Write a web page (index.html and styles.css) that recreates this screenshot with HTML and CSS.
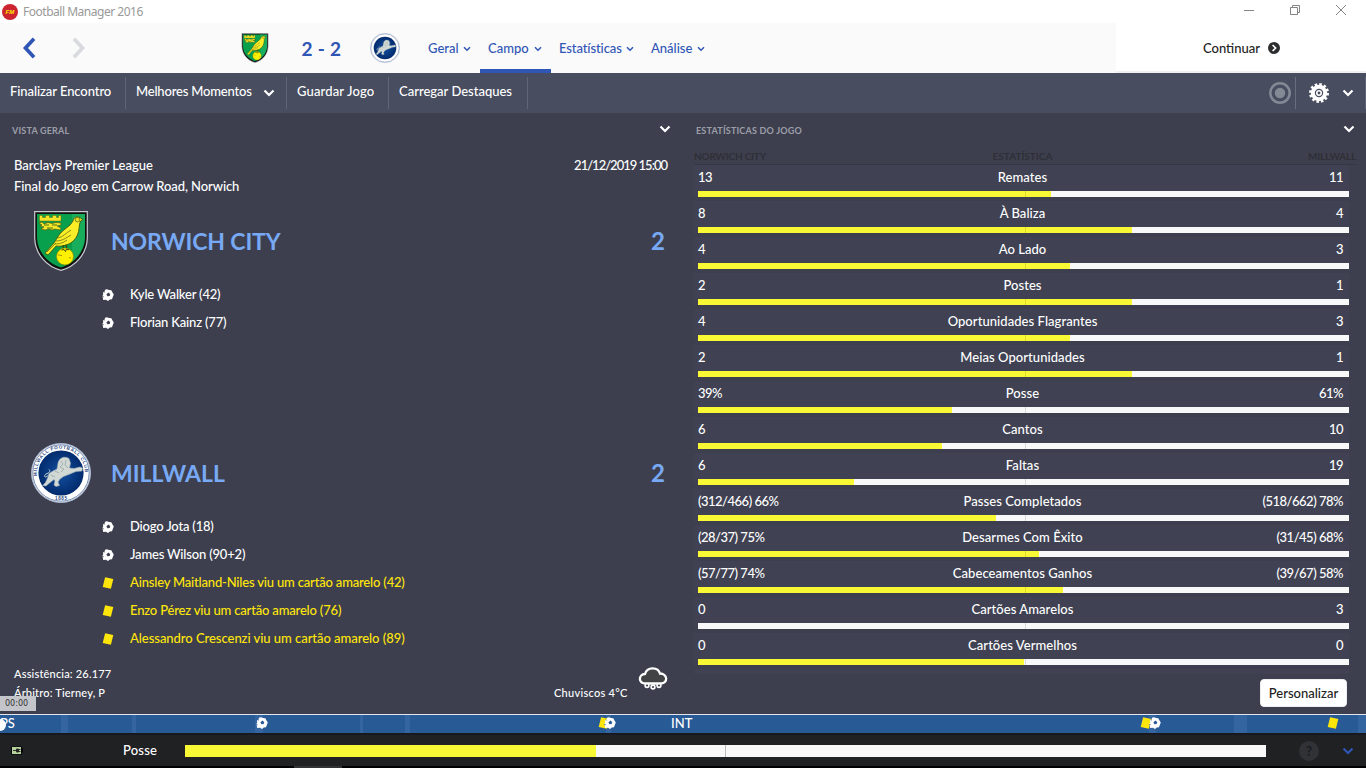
FILE: index.html
```html
<!DOCTYPE html>
<html lang="pt">
<head>
  <meta charset="UTF-8" />
  <meta name="viewport" content="width=device-width, initial-scale=1" />
  <title>Football Manager 2016</title>
  <link rel="stylesheet" href="styles.css">
</head>
<body>
  <!-- Shared icons -->
  <svg class="defs" width="0" height="0">
    <symbol id="chevron" viewBox="0 0 12 8"><path d="M1.5 1.5L6 6l4.500-4.500" fill="none" stroke="currentColor" stroke-width="2.200"/></symbol>
    <symbol id="ball" viewBox="0 0 12 12">
      <path d="M3 .8L5 .2 7 1 9.300 1.200 10.500 3.500 11.800 5.500 10.800 8 10 10.300 7.800 10.500 6 11.900 4 10.800 1.200 11 .8 8.500 0 7.800 1.200 5.500 1 3.200 2.600 2.800Z" fill="#fff"/>
      <path d="M6.300 3.600L8.200 4.900 7.700 7 5.500 7.300 4.400 5.400Z" fill="var(--hole, #3d3f4f)"/>
      <path d="M0 7.600l1.700.2M1.500 2.800l1 .5" stroke="var(--hole, #3d3f4f)" stroke-width=".8" fill="none"/>
    </symbol>
    <symbol id="card" viewBox="0 0 12 12"><path d="M3.100.3L11.300 2 8.900 11.700.7 10Z" fill="#ffe60a"/></symbol>
    <symbol id="norwich" viewBox="0 0 54 60">
      <path d="M.7.7H53.300V27C53 43 41 56 27 59.300 13 56 1 43 .7 27Z" fill="#111" stroke="#c9cbd0" stroke-width="1.200"/>
      <path d="M3 3H51V27C50.500 41 40 52.500 27 56.500 14 52.500 3.500 41 3 27Z" fill="#08a04c"/>
      <path d="M38 3H51V27C50 38 45 45 38 51Z" fill="#23b766" opacity=".6"/>
      <path d="M5.500 4.500h3v2h3v-2h4v2h3v-2h4v2h2v-2h2.500v5.500H5.500Z" fill="#f6e62a" stroke="#6b6a12" stroke-width=".5"/>
      <path d="M5 12l3-1 2 2 4-1.500 4 1 4-1 5 .5v2l-4 1 4 2-1 2-5-1-3 1-3-1-4 1-4-1 3-2-4-1 2-1Z" fill="#f6e62a" stroke="#5c6010" stroke-width=".7"/>
      <path d="M10 14h5m3 0h5m-10 3h6" stroke="#35650f" stroke-width=".9"/>
      <path d="M49 8.500L46 6.800C43 4.500 39.500 6.500 39 10 36 16 29 18 25 24L20 32 11 42 14 44 22 35C30 36 39 33 43 25 46 19 44.500 14 46.500 10Z" fill="#faee28" stroke="#3c4c0c" stroke-width=".8"/>
      <path d="M24 27c5-1 8-5 13-8M22 30c6 0 10-3 15-6M21 33c6 0 9-2 12-4M13 41l9-9" fill="none" stroke="#6b6f12" stroke-width=".8"/>
      <circle cx="43.500" cy="8.700" r="2.300" fill="#e8dc27" stroke="#55601a" stroke-width=".7"/>
      <path d="M29 34l1 5M32 33.500l1 5" stroke="#34440a" stroke-width="1.200"/>
      <circle cx="31" cy="45.500" r="8.500" fill="#fff000" stroke="#7d7b0a" stroke-width=".6"/>
      <path d="M27.500 39l2.500-.5 1.500 2 1-2.500 2.500.8" stroke="#34440a" stroke-width="1" fill="none"/>
      <path d="M24 44l4 .5m7 2l2 .5" stroke="#928800" stroke-width=".8"/>
    </symbol>
    <symbol id="millwall" viewBox="0 0 60 60">
      <circle cx="30" cy="30" r="29.500" fill="#fff" stroke="#a9b7cf"/>
      <circle cx="30" cy="30" r="28.200" fill="none" stroke="#36558b" stroke-width=".7"/>
      <circle cx="30" cy="30" r="22.600" fill="url(#blueGlow)"/>
      <path d="M27 20C28 15 33 12.500 38 15.500L39.500 20 38.500 25 43 25.500 49 24 51.500 25 51 28 45 28.500 39 31 32.500 33.500 29 36 27 39 28.500 42.500 25 43.500 23 42 24 38 23 36.500 18.500 40 15 43 11.500 42.500 14.500 39.500 17 34 18 30.500 22 28 26 26Z" fill="#d2d9d5" stroke="#9badb6" stroke-width=".6"/>
      <path d="M30 18l2 3-3 3 4 2-3 3m5-12l-1 5 3 3m-13 3l4 2m-8 2l4 2" fill="none" stroke="#93a5a7" stroke-width=".8"/>
      <path d="M17.500 32C14 36 12 33 15 31 18 30 20 28 18 26.500" fill="none" stroke="#c5d0d0" stroke-width="1"/>
    </symbol>
    <radialGradient id="blueGlow"><stop offset="0" stop-color="#1450a0"/><stop offset="1" stop-color="#022b6d"/></radialGradient>
  </svg>

  <!-- Window title bar -->
  <header class="titlebar">
    <svg class="fm-logo" viewBox="0 0 16 16"><circle cx="8" cy="8" r="8" fill="#cc2531"/><text x="3.500" y="10.200">FM</text></svg>
    <span class="window-title">Football Manager 2016</span>
    <div class="window-buttons">
      <svg width="12" height="12" viewBox="0 0 12 12"><path d="M1 6.500h10"/></svg>
      <svg width="12" height="12" viewBox="0 0 12 12"><path d="M1.500 3.500h7v7h-7ZM3.500 3v-1.500h7v7H9"/></svg>
      <svg width="12" height="12" viewBox="0 0 12 12"><path d="M1 1l10 10M11 1L1 11"/></svg>
    </div>
  </header>

  <!-- Navigation -->
  <nav class="navbar">
    <svg class="arrow back" viewBox="0 0 14 22"><path d="M12 1.800L3.500 11l8.500 9.200"/></svg>
    <svg class="arrow forward" viewBox="0 0 14 22"><path d="M2 1.800L10.500 11 2 20.200"/></svg>
    <svg class="nav-norwich"><use href="#norwich"/></svg>
    <div class="score">2 - 2</div>
    <svg class="nav-millwall"><use href="#millwall"/></svg>
    <div class="tabs">
      <a class="tab tab-geral">Geral <svg><use href="#chevron"/></svg></a>
      <a class="tab tab-campo active">Campo <svg><use href="#chevron"/></svg></a>
      <a class="tab tab-stats">Estatísticas <svg><use href="#chevron"/></svg></a>
      <a class="tab tab-analise">Análise <svg><use href="#chevron"/></svg></a>
    </div>
    <div class="continue">
      <span>Continuar</span>
      <svg viewBox="0 0 12 12"><circle cx="6" cy="6" r="6" fill="#2c2d2f"/><path d="M4.600 3L7.600 6l-3 3" fill="none" stroke="#fff" stroke-width="1.700"/></svg>
    </div>
  </nav>

  <div class="toolbar">
    <div class="tool tool-end">Finalizar Encontro</div>
    <div class="tool tool-best">Melhores Momentos <svg><use href="#chevron"/></svg></div>
    <div class="tool tool-save">Guardar Jogo</div>
    <div class="tool tool-load">Carregar Destaques</div>
    <div class="toolbar-right">
      <svg class="record" viewBox="0 0 22 22"><circle cx="11" cy="11" r="9.700" fill="none" stroke="#858996" stroke-width="2.500"/><circle cx="11" cy="11" r="5.200" fill="#858996"/></svg>
      <div class="settings">
        <svg class="gear" viewBox="0 0 20 20">
          <circle cx="10" cy="10" r="6.200" fill="none" stroke="#fff" stroke-width="4"/>
          <circle cx="10" cy="10" r="8.700" fill="none" stroke="#fff" stroke-width="2.600" stroke-dasharray="2.500 2.055"/>
          <circle cx="10" cy="10" r="2.200" fill="none" stroke="#fff" stroke-width="1.600"/>
        </svg>
        <svg class="chev"><use href="#chevron"/></svg>
      </div>
    </div>
  </div>

  <main class="panels">
    <!-- Overview -->
    <section class="overview">
      <div class="panel-title"><h2>VISTA GERAL</h2><svg><use href="#chevron"/></svg></div>
      <div class="match-info">
        <div class="info-row"><span>Barclays Premier League</span><span class="date">21/12/2019 15:00</span></div>
        <div class="info-row"><span class="venue">Final do Jogo em Carrow Road, Norwich</span></div>
      </div>
      <div class="team">
        <div class="team-head"><svg class="crest"><use href="#norwich"/></svg><h1 class="name-norwich">NORWICH CITY</h1><span class="goals">2</span></div>
        <ul class="events">
          <li><svg><use href="#ball"/></svg><span>Kyle Walker (42)</span></li>
          <li><svg><use href="#ball"/></svg><span>Florian Kainz (77)</span></li>
        </ul>
      </div>
      <div class="team">
        <div class="team-head">
          <svg class="crest" viewBox="0 0 60 60">
            <use href="#millwall"/>
            <path id="badgeArc" d="M6.100 33A24.100 24.100 0 1 1 53.900 33" fill="none"/>
            <text class="badge-text"><textPath href="#badgeArc" textLength="78" lengthAdjust="spacing">MILLWALL FOOTBALL CLUB</textPath></text>
            <text class="badge-text" x="24" y="57.300" textLength="12">1885</text>
          </svg>
          <h1>MILLWALL</h1><span class="goals">2</span>
        </div>
        <ul class="events">
          <li><svg><use href="#ball"/></svg><span>Diogo Jota (18)</span></li>
          <li><svg><use href="#ball"/></svg><span>James Wilson (90+2)</span></li>
          <li class="booked"><svg><use href="#card"/></svg><span>Ainsley Maitland-Niles viu um cartão amarelo (42)</span></li>
          <li class="booked"><svg><use href="#card"/></svg><span>Enzo Pérez viu um cartão amarelo (76)</span></li>
          <li class="booked last"><svg><use href="#card"/></svg><span>Alessandro Crescenzi viu um cartão amarelo (89)</span></li>
        </ul>
      </div>
      <footer class="match-foot">
        <div class="attendance"><div>Assistência: 26.177</div><div>Árbitro: Tierney, P</div></div>
        <div class="weather">Chuviscos 4°C</div>
        <svg class="cloud" viewBox="0 0 30 24">
          <path d="M8 17.500C0 17.500 0 8.500 7 8 9 .5 20 .5 22 7.500 29.500 7.500 30.500 17 23 17.500Z" fill="#414345" stroke="#fff" stroke-width="2.300"/>
          <circle cx="9" cy="19.500" r="1.900"/><circle cx="15" cy="21" r="1.900"/><circle cx="21" cy="19.500" r="1.900"/>
        </svg>
      </footer>
    </section>

    <!-- Match stats -->
    <section class="stats">
      <div class="panel-title"><h2>ESTATÍSTICAS DO JOGO</h2><svg><use href="#chevron"/></svg></div>
      <div class="stats-head"><span>NORWICH CITY</span><span>ESTATÍSTICA</span><span>MILLWALL</span></div>
      <div class="stats-list">
        <div class="stat"><div class="values"><span>13</span><span>Remates</span><span>11</span></div><div class="bar"><div class="fill" style="width:54.2%"></div></div></div>
        <div class="stat"><div class="values"><span>8</span><span>À Baliza</span><span>4</span></div><div class="bar"><div class="fill" style="width:66.67%"></div></div></div>
        <div class="stat"><div class="values"><span>4</span><span>Ao Lado</span><span>3</span></div><div class="bar"><div class="fill" style="width:57.14%"></div></div></div>
        <div class="stat"><div class="values"><span>2</span><span>Postes</span><span>1</span></div><div class="bar"><div class="fill" style="width:66.67%"></div></div></div>
        <div class="stat"><div class="values"><span>4</span><span>Oportunidades Flagrantes</span><span>3</span></div><div class="bar"><div class="fill" style="width:57.14%"></div></div></div>
        <div class="stat"><div class="values"><span>2</span><span>Meias Oportunidades</span><span>1</span></div><div class="bar"><div class="fill" style="width:66.67%"></div></div></div>
        <div class="stat"><div class="values"><span>39%</span><span>Posse</span><span>61%</span></div><div class="bar"><div class="fill" style="width:39%"></div></div></div>
        <div class="stat"><div class="values"><span>6</span><span>Cantos</span><span>10</span></div><div class="bar"><div class="fill" style="width:37.5%"></div></div></div>
        <div class="stat"><div class="values"><span>6</span><span>Faltas</span><span>19</span></div><div class="bar"><div class="fill" style="width:24%"></div></div></div>
        <div class="stat"><div class="values"><span>(312/466) 66%</span><span>Passes Completados</span><span>(518/662) 78%</span></div><div class="bar"><div class="fill" style="width:45.8%"></div></div></div>
        <div class="stat"><div class="values"><span>(28/37) 75%</span><span>Desarmes Com Êxito</span><span>(31/45) 68%</span></div><div class="bar"><div class="fill" style="width:52.45%"></div></div></div>
        <div class="stat"><div class="values"><span>(57/77) 74%</span><span>Cabeceamentos Ganhos</span><span>(39/67) 58%</span></div><div class="bar"><div class="fill" style="width:56.06%"></div></div></div>
        <div class="stat"><div class="values"><span>0</span><span>Cartões Amarelos</span><span>3</span></div><div class="bar"><div class="fill" style="width:0%"></div></div></div>
        <div class="stat"><div class="values"><span>0</span><span>Cartões Vermelhos</span><span>0</span></div><div class="bar"><div class="fill" style="width:50%"></div></div></div>
      </div>
      <button class="customize">Personalizar</button>
    </section>
  </main>

  <!-- Match timeline -->
  <div class="timeline">
    <i class="band" style="left:61px;width:7px"></i>
    <i class="band" style="left:132px;width:4px"></i>
    <i class="band" style="left:255px;width:8px"></i>
    <i class="band" style="left:360px;width:3px"></i>
    <i class="band" style="left:405px;width:5px"></i>
    <i class="band" style="left:606px;width:5px"></i>
    <i class="band" style="left:1149px;width:7px"></i>
    <i class="band" style="left:1234px;width:13px"></i>
    <i class="band" style="left:1358px;width:8px"></i>
    <span class="mark" style="left:0px">PS</span>
    <i class="playhead"></i>
    <svg style="left:256px"><use href="#ball"/></svg>
    <svg style="left:598px"><use href="#card"/></svg>
    <svg style="left:604px"><use href="#ball"/></svg>
    <span class="mark" style="left:671px">INT</span>
    <svg style="left:1140px"><use href="#card"/></svg>
    <svg style="left:1149px"><use href="#ball"/></svg>
    <svg style="left:1327px"><use href="#card"/></svg>
    <span class="clock">00:00</span>
  </div>

  <div class="statusbar">
    <svg class="plug" viewBox="0 0 13 9"><path d="M0 .5h11v2h1v4h-1v2H0Z" fill="#050505"/><path d="M1 1h9v7H1Z" fill="#b5d29b"/><path d="M2 4.500h3M5.500 3h2v3h-2ZM7.500 3.500h2M7.500 5.500h2" stroke="#222" stroke-width=".9" fill="#222"/></svg>
    <span class="posse">Posse</span>
    <div class="possession"><div class="fill" style="width:38%"></div></div>
    <div class="help">?</div>
    <svg class="chev"><use href="#chevron"/></svg>
  </div>
  <div class="bottom-edge"><i></i></div>
</body>
</html>
```
FILE: styles.css
```css
* {
  box-sizing: border-box;
}

body {
  margin: 0;
  width: 1366px;
  height: 768px;
  overflow: hidden;
  display: flex;
  flex-direction: column;
  background: #3d3f4f;
  color: #fff;
  font-family: 'Lato', sans-serif;
  font-size: 13px;
  font-weight: 500;
}

h1, h2, ul {
  margin: 0;
  padding: 0;
}

svg {
  display: block;
  flex: none;
}

.defs {
  position: absolute;
}

.badge-text {
  font: bold 4.600px 'Liberation Sans', sans-serif;
  fill: #29477f;
}

/* Title bar */
.titlebar {
  height: 23px;
  flex: none;
  display: flex;
  align-items: center;
  padding-left: 2px;
  background: #fff;
  color: #999;
}

.fm-logo {
  width: 16px;
  height: 16px;
  font: italic 900 6px 'Liberation Sans', sans-serif;
  fill: #ffe900;
}

.window-title {
  margin-left: 5px;
  font: 12px 'Noto Sans', sans-serif;
  letter-spacing: -0.480px;
}

.window-buttons {
  margin-left: auto;
  margin-right: 19px;
  margin-bottom: 3px;
  display: flex;
  gap: 34px;
}

.window-buttons path {
  fill: none;
  stroke: #858585;
}

/* Navigation */
.navbar {
  height: 50px;
  flex: none;
  display: flex;
  align-items: center;
  background: #fafafa;
  color: #2f55b5;
}

.arrow {
  width: 14px;
  height: 22px;
  fill: none;
  stroke-width: 3.700;
}

.back {
  margin-left: 22px;
  stroke: #2f55b5;
}

.forward {
  margin-left: 36px;
  stroke: #d9dadd;
}

.nav-norwich {
  width: 28px;
  height: 30px;
  margin-left: 155px;
}

.score {
  width: 101px;
  padding-left: 4px;
  text-align: center;
  font-size: 19px;
  font-weight: bold;
  letter-spacing: 0.300px;
}

.nav-millwall {
  width: 30px;
  height: 30px;
}

.tabs {
  align-self: stretch;
  display: flex;
  margin-left: 20px;
}

.tab {
  display: flex;
  align-items: center;
  justify-content: space-between;
  height: 50px;
  padding: 0 9px 0 8px;
  border-bottom: 4px solid transparent;
  border-top: 3px solid transparent;
}

.tab svg {
  width: 8px;
  height: 6px;
  margin-top: 2px;
}

.tab-geral {
  width: 60px;
}

.tab-campo {
  width: 71px;
}

.tab-stats {
  width: 92px;
  letter-spacing: -0.100px;
}

.tab-analise {
  width: 71px;
}

.active {
  border-bottom-color: #2f55b5;
}

.continue {
  width: 250px;
  height: 50px;
  margin-left: auto;
  padding-left: 87px;
  padding-top: 1px;
  display: flex;
  align-items: center;
  gap: 8px;
  background: #fff;
  color: #222;
  border-bottom: 2px solid #f0f0f2;
}

.continue svg {
  width: 12px;
  height: 12px;
}

/* Toolbar */
.toolbar {
  height: 40px;
  flex: none;
  display: flex;
  padding-top: 4px;
  background: #484d60;
}

.tool {
  display: flex;
  align-items: center;
  justify-content: space-between;
  height: 32px;
  padding: 0 11px 4px 10px;
  border-right: 1px solid #5f6476;
}

.tool svg {
  margin-top: 3px;
}

.tool svg, .chev, .panel-title svg {
  width: 12px;
  height: 8px;
}

.tool-end {
  width: 126px;
  letter-spacing: -0.080px;
}

.tool-best {
  width: 161px;
  letter-spacing: -0.180px;
}

.tool-save {
  width: 102px;
  letter-spacing: 0.150px;
}

.tool-load {
  width: 139px;
}

.toolbar-right {
  margin-left: auto;
  display: flex;
  align-items: center;
  height: 32px;
}

.record {
  width: 22px;
  height: 22px;
  margin-right: 4px;
}

.settings {
  display: flex;
  align-items: center;
  gap: 13px;
  width: 71px;
  height: 32px;
  padding-left: 13px;
  border-left: 1px solid #696d7d;
  border-right: 1px solid #5f6476;
}

.gear {
  width: 20px;
  height: 20px;
}

/* Panels */
.panels {
  flex: none;
  height: 601px;
  display: flex;
}

.overview {
  width: 684px;
  display: flex;
  flex-direction: column;
}

.panel-title {
  display: flex;
  justify-content: space-between;
  align-items: center;
  height: 34px;
  padding: 1px 13px 0 12px;
}

.panel-title h2 {
  color: #9c9ea7;
  font-size: 9px;
  font-weight: bold;
  letter-spacing: 0.200px;
}

.panel-title svg {
  margin-bottom: 3px;
}

.match-info {
  padding: 8px 17px 10px 14px;
}

.info-row {
  display: flex;
  justify-content: space-between;
  line-height: 21px;
}

.date {
  letter-spacing: -1px;
}

.venue {
  letter-spacing: -0.080px;
}

.team {
  height: 232px;
}

.team-head {
  display: flex;
  align-items: center;
  height: 68px;
  padding: 0 19px 0 31px;
}

.crest {
  width: 60px;
  height: 60px;
}

.team-head h1 {
  margin-left: 20px;
  padding-bottom: 1px;
  font-size: 23px;
  color: #78a9f4;
}

.team-head .name-norwich {
  letter-spacing: -0.120px;
}

.goals {
  margin-left: auto;
  padding-bottom: 2px;
  font-size: 24px;
  font-weight: bold;
  color: #78a9f4;
}

.events {
  list-style: none;
  padding: 5px 0 0 102px;
  letter-spacing: -0.180px;
}

.events li {
  display: flex;
  align-items: center;
  gap: 16px;
  height: 28px;
}

.events .last {
  letter-spacing: -0.040px;
}

.events svg {
  width: 12px;
  height: 12px;
  margin-top: 2px;
}

.booked {
  color: #ffe60a;
}

.match-foot {
  display: flex;
  margin-top: -7px;
  padding-left: 14px;
  font-size: 11px;
  line-height: 19px;
  letter-spacing: 0.180px;
}

.attendance {
  width: 540px;
}

.weather {
  width: 84px;
  padding-top: 19px;
  letter-spacing: 0.280px;
}

.cloud {
  width: 30px;
  height: 24px;
  margin-top: 2px;
}

.cloud circle {
  fill: #3d3f4f;
  stroke: #fff;
  stroke-width: 1.600;
}

/* Statistics */
.stats {
  width: 682px;
  display: flex;
  flex-direction: column;
}

.stats .panel-title {
  padding-right: 11px;
}

.stats-head {
  display: grid;
  grid-template-columns: 1fr 1fr 1fr;
  height: 18px;
  margin: 0 10px;
  padding-top: 3px;
  border-bottom: 1px solid #353744;
  color: #2e3036;
  font-size: 10px;
  font-weight: bold;
  line-height: 12px;
  letter-spacing: -0.200px;
}

.stats-head span:nth-child(2), .values span:nth-child(2) {
  text-align: center;
}

.stats-head span:nth-child(2) {
  padding-right: 5px;
  letter-spacing: 0;
}

.stats-head span:nth-child(3), .values span:nth-child(3) {
  text-align: right;
}

.stats-list {
  margin: 0 17px 0 10px;
  padding-bottom: 5px;
  background: #404253;
}

.stat {
  height: 36px;
  padding-left: 4px;
  border-bottom: 4px solid #3d3f4f;
}

.values {
  display: grid;
  grid-template-columns: 1fr 1.400fr 1fr;
  height: 26px;
  padding-right: 6px;
  line-height: 24px;
  letter-spacing: -0.500px;
}

.values span:nth-child(2) {
  padding-left: 4px;
  letter-spacing: 0.060px;
}

.bar {
  position: relative;
  height: 6px;
  background: #f8f8f8;
}

.bar::after {
  content: '';
  position: absolute;
  left: 327px;
  top: 0;
  width: 1px;
  height: 6px;
  background: rgba(0, 0, 0, 0.120);
}

.fill {
  height: 100%;
  background: #f8f835;
}

.customize {
  width: 87px;
  height: 28px;
  margin: 5px 19px 0 auto;
  padding: 0;
  border: 1px solid #eee;
  border-radius: 4px;
  background: #fff;
  color: #222;
  font: 500 13px 'Lato', sans-serif;
}

/* Timeline */
.timeline {
  position: relative;
  flex: none;
  height: 19px;
  border-top: 1px solid #e3e6ed;
  background: #285a96;
}

.timeline > * {
  position: absolute;
}

.band {
  top: 0;
  height: 18px;
  background: #3465a1;
}

.timeline svg {
  top: 2px;
  width: 12px;
  height: 12px;
  --hole: #285a96;
}

.mark {
  line-height: 17px;
}

.playhead {
  left: -6px;
  top: 4px;
  width: 12px;
  height: 12px;
  border-radius: 50%;
  background: #fff;
}

.clock {
  left: 0;
  top: -19px;
  width: 36px;
  height: 15px;
  padding-left: 5px;
  background: #c4c5cb;
  color: #333;
  font: 8px/15px 'DejaVu Sans', sans-serif;
}

/* Status bar */
.statusbar {
  flex: none;
  height: 33px;
  display: flex;
  align-items: center;
  padding-left: 11px;
  border-top: 2px solid #17191f;
  background: #1f2123;
}

.plug {
  width: 13px;
  height: 9px;
}

.posse {
  width: 62px;
  margin-left: 99px;
  padding-bottom: 2px;
  letter-spacing: 0.200px;
}

.possession {
  position: relative;
  width: 1081px;
  height: 12px;
  background: #f8f8f8;
}

.possession::after {
  content: '';
  position: absolute;
  left: 540px;
  top: 0;
  width: 1px;
  height: 12px;
  background: #bbb;
}

.help {
  width: 20px;
  height: 20px;
  margin: 0 23px 0 33px;
  border-radius: 50%;
  background: #303236;
  color: #1b1d1f;
  font: bold 14px/20px 'Lato', sans-serif;
  text-align: center;
}

.statusbar .chev {
  color: #2f55b5;
}

.bottom-edge {
  flex: none;
  height: 2px;
  background: #000;
}

.bottom-edge i {
  display: block;
  width: 48px;
  height: 2px;
  margin-left: 294px;
  background: #333;
}
```
